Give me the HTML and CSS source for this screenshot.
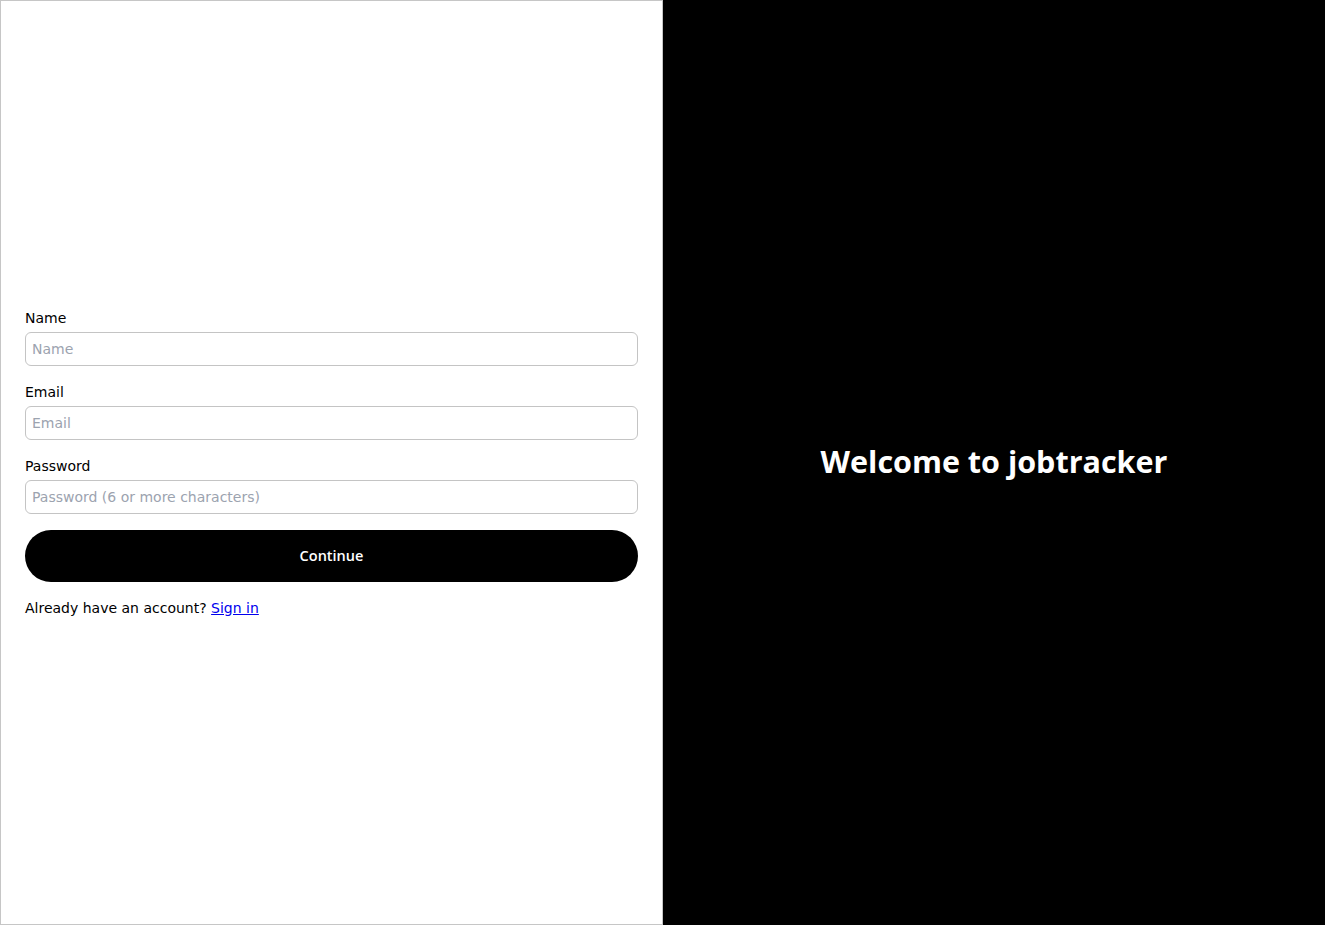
FILE: index.html
```html
<!DOCTYPE html>
<html lang="en">
<head>
<meta charset="utf-8">
<title>Sign up - jobtracker</title>
<link rel="stylesheet" href="styles.css">
</head>
<body>
<main class="page">
  <section class="form-panel">
    <form class="form">
      <div class="field">
        <label class="label" for="name">Name</label>
        <input class="input" id="name" type="text" placeholder="Name">
      </div>
      <div class="field">
        <label class="label" for="email">Email</label>
        <input class="input" id="email" type="email" placeholder="Email">
      </div>
      <div class="field">
        <label class="label" for="password">Password</label>
        <input class="input" id="password" type="password" placeholder="Password (6 or more characters)">
      </div>
      <button class="button" type="button">Continue</button>
      <p class="switch">Already have an account? <a class="link" href="#">Sign in</a></p>
    </form>
  </section>
  <section class="hero">
    <h1 class="hero-title">Welcome to jobtracker</h1>
  </section>
</main>
</body>
</html>
```
FILE: styles.css
```css
* { box-sizing: border-box; }
html, body { margin: 0; padding: 0; height: 100%; }
body {
  font-family: "DejaVu Sans", "Open Sans", sans-serif;
  font-size: 14px;
  color: #000;
  background: #fff;
}
.page {
  display: grid;
  grid-template-columns: 663px 1fr;
  height: 925px;
}
.form-panel {
  border: 1px solid #c6c6c6;
  display: flex;
  flex-direction: column;
  justify-content: center;
  padding: 0 24px;
  background: #fff;
}
.form {
  display: flex;
  flex-direction: column;
  gap: 16px;
}
.field {
  display: flex;
  flex-direction: column;
  gap: 4px;
}
.label {
  font-size: 14px;
  line-height: 20px;
}
.input {
  height: 34px;
  width: 100%;
  border: 1px solid #c4c4c4;
  border-radius: 6px;
  padding: 0 6px;
  font-family: inherit;
  font-size: 14px;
  color: #000;
  outline: none;
}
.input::placeholder { color: #9ca3af; }
.button {
  height: 52px;
  border: 0;
  border-radius: 26px;
  background: #000;
  color: #fff;
  font-family: "Open Sans", sans-serif;
  font-size: 14.5px;
  font-weight: 600;
  cursor: pointer;
}
.switch {
  margin: 0;
  font-size: 14px;
  line-height: 20px;
}
.link { color: #0000ee; text-decoration: underline; }
.hero {
  background: #000;
  display: flex;
  align-items: center;
  justify-content: center;
}
.hero-title {
  margin: 0;
  padding-bottom: 3px;
  color: #fff;
  font-family: "Open Sans", sans-serif;
  font-size: 30.5px;
  font-weight: 700;
  line-height: 40px;
}
```
